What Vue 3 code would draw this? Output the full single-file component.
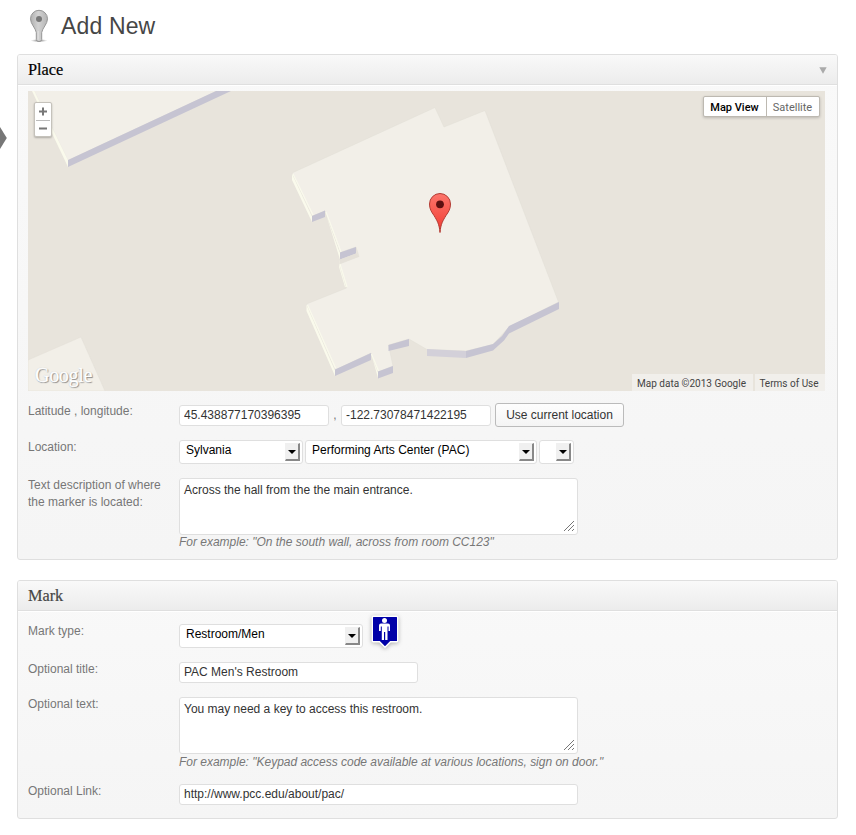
<script setup>
import { ref } from 'vue'

const lat = ref('45.438877170396395')
const lng = ref('-122.73078471422195')
const where = ref('Across the hall from the the main entrance.')
const title = ref("PAC Men's Restroom")
const text = ref('You may need a key to access this restroom.')
const link = ref('http://www.pcc.edu/about/pac/')
</script>

<template>
  <main class="page">
    <svg class="flyout" viewBox="0 0 7 24" width="7" height="24"><path d="M0 1L6.8 12L0 23Z" fill="#777" /></svg>
    <header class="title">
      <svg class="pin" viewBox="28 8 22 36" width="22" height="36">
        <defs>
          <linearGradient id="pinFill" x1="0" x2="1"><stop offset="0" stop-color="#b0b0b0" /><stop offset=".45" stop-color="#d2d2d2" /><stop offset="1" stop-color="#b4b4b4" /></linearGradient>
          <radialGradient id="pinShade"><stop offset="0" stop-color="#777" /><stop offset="1" stop-color="#999" stop-opacity="0" /></radialGradient>
        </defs>
        <ellipse cx="39" cy="40.600" rx="8.500" ry="1.700" fill="url(#pinShade)" />
        <path d="M30.500 18.800A8.500 8.500 0 0 1 47.500 18.800C47.500 24 42.400 28 41.700 32.500V39.500Q41.700 41.500 39 41.500Q36.300 41.500 36.300 39.500V32.500C35.600 28 30.500 24 30.500 18.800Z" fill="url(#pinFill)" stroke="#969696" />
        <circle cx="39" cy="19" r="3" fill="#777" />
        <path d="M38.200 31V39.500" stroke="#ddd" stroke-width="1.400" />
      </svg>
      <h1>Add New</h1>
    </header>

    <section class="panel place">
      <div class="bar"><h2 class="active">Place</h2><svg viewBox="0 0 8 7" width="8" height="7"><path d="M.3 .3H7.700L4 6.800Z" fill="#aaa" /></svg></div>
      <div class="map">
        <svg class="tiles" viewBox="28 91 797 300" width="797" height="300">
          <defs><linearGradient id="marker" x1="0" y1="0" x2="0" y2="1"><stop offset="0" stop-color="#fc756b" /><stop offset="1" stop-color="#f13a31" /></linearGradient></defs>
          <rect x="28" y="91" width="797" height="300" fill="#e8e4dc" />
          <path d="M32 91L68 167V160L34.500 91Z" fill="#fafaec" />
          <path d="M34.500 91L68 160L216 91Z" fill="#f2efe8" />
          <path d="M68 160L216 91H231L68 167Z" fill="#c6c4d2" />
          <path d="M28 360L81 337L105 391H28Z" fill="#f2efe8" stroke="#e3dfd7" stroke-width=".5" />
          <path d="M292 173V180L312 222V215ZM325 211L340 259.500V252ZM339 260V267L345 287L347 287ZM306.500 304V311L335 376V369ZM371 353L378 378V371Z" fill="#fafaec" />
          <path d="M292 173L435 107.500L444 127L485 110.500L558.500 302L509 327L493 344.500L466 351L427 349.500L409 339L388.500 345L393 366L378 372L371 353L335 370L306.500 304L346.500 288L339.500 264L359 256.500L356 247L340 252.500L325 211L312 216Z" fill="#f2efe8" stroke="#e0ddd4" stroke-width=".45" />
          <path d="M293 174L313 215M326 212L341 252M340 264L347 287M307.500 305L335.500 368M371.500 354L378.500 371" fill="none" stroke="#fafaec" stroke-width="1.200" />
          <path d="M312 216L325 210.500V217L312 222ZM340 252.500L356 247V253.500L340 259.500ZM335 369.500L371 353V360L335 376ZM388.500 345L409 339V346L388.500 351ZM378 371.500L393 366V373L378 378.500ZM466 351L493 344L502 336L509 326L559 302V309L509 333.500L504 340.500L493 350.500L466 358Z" fill="#c6c4d2" />
          <path d="M427 349L466 351V358L427 356Z" fill="#d3d0d9" />
          <path d="M340 259.500L356 253.500L359 256.500L339 264Z" fill="#e5e1d9" />
          <path d="M440 232.500C439.300 224 437 220.500 434 215.500C431.500 212 429.500 209 429.500 204A10.500 10.500 0 0 1 450.500 204C450.500 209 448.500 212 446 215.500C443 220.500 440.700 224 440 232.500Z" fill="url(#marker)" stroke="#b23b33" />
          <circle cx="440" cy="204.300" r="3.900" fill="#5c1010" />
        </svg>
        <div class="zoom">
          <svg viewBox="0 0 16 33" width="16" height="33"><path d="M4 8.500H12M8 4.500V12.500M4 25.500H12" stroke="#777" stroke-width="2" /><path d="M1 17.500H15" stroke="#bbb" /></svg>
        </div>
        <div class="modes"><b>Map View</b><span>Satellite</span></div>
        <span class="google">Google</span>
        <div class="credits"><span>Map data ©2013 Google</span><span>Terms of Use</span></div>
      </div>
      <div class="row r-lat">
        <label>Latitude , longitude:</label>
        <div class="field"><input v-model="lat" class="coord"><i class="comma">,</i><input v-model="lng" class="coord"><button>Use current location</button></div>
      </div>
      <div class="row r-loc">
        <label>Location:</label>
        <div class="field selects">
          <div class="select campus"><span>Sylvania</span><i class="arrow"></i></div>
          <div class="select building"><span>Performing Arts Center (PAC)</span><i class="arrow"></i></div>
          <div class="select room"><span></span><i class="arrow"></i></div>
        </div>
      </div>
      <div class="row r-where">
        <label>Text description of where<br>the marker is located:</label>
        <div class="stack">
          <div class="area"><textarea v-model="where"></textarea><svg viewBox="0 0 12 12" width="12" height="12"><path d="M1 11L11 1M5 11L11 5M9 11L11 9" stroke="#777" /></svg></div>
          <em>For example: "On the south wall, across from room CC123"</em>
        </div>
      </div>
    </section>

    <section class="panel mark">
      <div class="bar"><h2>Mark</h2></div>
      <div class="row r-type">
        <label>Mark type:</label>
        <div class="field">
          <div class="select type"><span>Restroom/Men</span><i class="arrow"></i></div>
          <svg class="men" viewBox="368 612 34 38" width="34" height="38">
            <path d="M373.500 616.300H396.500Q397.700 616.300 397.700 617.500V640.500Q397.700 641.800 396.500 641.800H390.500L385 647.300L379.500 641.800H373.500Q372.300 641.800 372.300 640.500V617.500Q372.300 616.300 373.500 616.300Z" fill="#0000a8" stroke="#fff" stroke-width="1.400" />
            <circle cx="384.500" cy="620.500" r="2.500" fill="#fff" />
            <path d="M381 623.500H388Q390 623.500 390 625.500V631H388.500V626.500H387.500V640H385.200V632H384V640H381.800V626.500H380.800V631H379V625.500Q379 623.500 381 623.500Z" fill="#fff" />
          </svg>
        </div>
      </div>
      <div class="row r-title"><label>Optional title:</label><div class="field"><input v-model="title" class="mid"></div></div>
      <div class="row r-text">
        <label>Optional text:</label>
        <div class="stack">
          <div class="area"><textarea v-model="text"></textarea><svg viewBox="0 0 12 12" width="12" height="12"><path d="M1 11L11 1M5 11L11 5M9 11L11 9" stroke="#777" /></svg></div>
          <em>For example: "Keypad access code available at various locations, sign on door."</em>
        </div>
      </div>
      <div class="row r-link"><label>Optional Link:</label><div class="field"><input v-model="link" class="wide"></div></div>
    </section>
  </main>
</template>

<style>
body { background: #fff; }
</style>

<style scoped>
* { box-sizing: border-box; }
.page { position: relative; height: 835px; padding: 8px 18px 0 17px; font: 12px/17px "Liberation Sans", Arial, sans-serif; color: #333; overflow: hidden; }
.flyout { position: absolute; left: 0; top: 126px; }
.title { display: flex; height: 46px; padding-left: 11px; }
h1 { margin: 3px 0 0 11px; font-size: 23px; line-height: 30px; font-weight: 400; color: #464646; letter-spacing: .15px; }
.panel { width: 821px; border: 1px solid #dfdfdf; border-radius: 3px; background: linear-gradient(#f9f9f9, #f5f5f5); }
.place { height: 506px; }
.mark { height: 239px; margin-top: 20px; }
.bar { display: flex; justify-content: space-between; align-items: center; height: 30px; padding: 0 10px; border-bottom: 1px solid #dfdfdf; background: linear-gradient(#f9f9f9, #ececec); box-shadow: 0 1px 0 #fff; border-radius: 2px 2px 0 0; }
.bar svg { margin-top: 1px; }
h2 { margin: 0; font: 400 16.300px/20px "Liberation Serif", serif; color: #464646; -webkit-text-stroke: .2px; }
h2.active { color: #000; }
.map { position: relative; width: 797px; height: 300px; margin: 6px 0 0 10px; overflow: hidden; font: 11px/17px Roboto, sans-serif; color: #444; }
.tiles { display: block; }
.zoom { position: absolute; left: 6px; top: 11px; width: 18px; height: 35px; border: 1px solid #c5c2bb; border-radius: 2px; background: #fff; box-shadow: 0 1px 2px rgba(0,0,0,.25); }
.zoom svg { display: block; }
.modes { position: absolute; left: 675px; top: 5px; display: flex; height: 21px; border: 1px solid #bdb9b1; border-radius: 2px; background: #fff; line-height: 21px; box-shadow: 0 1px 3px rgba(0,0,0,.2); }
.modes b { width: 63px; padding-right: 1px; text-align: center; font-weight: 500; color: #000; border-right: 1px solid #bdb9b1; }
.modes span { width: 52px; padding-right: 1px; text-align: center; color: #666; }
.google { position: absolute; left: 7px; top: 273px; font: 20px/22px "Liberation Serif", serif; color: #fff; letter-spacing: -.3px; -webkit-text-stroke: .3px #fff; text-shadow: 1px 1px 1px #888, 0 0 1px #aaa; }
.credits { position: absolute; right: 0; bottom: 0; display: flex; gap: 2px; font-size: 10px; line-height: 19px; }
.credits span { height: 17px; padding-right: 2px; background: #f1efeb; text-align: center; width: 70px; }
.credits span:first-child { width: 121px; }
.row { display: flex; padding-left: 10px; }
label { width: 151px; flex: none; color: #777; }
.field { display: flex; align-items: flex-start; }
input, textarea { display: block; margin: 0; border: 1px solid #dfdfdf; border-radius: 3px; background: #fff; color: #333; font: 12px/15px "Liberation Sans", Arial, sans-serif; outline: none; }
input { height: 21px; padding: 0 4px 2px; }
.coord { width: 150px; }
.comma { width: 12px; text-align: center; font-style: normal; color: #777; padding: 2px 0 0 0; }
button { height: 24px; width: 129px; margin: -2px 0 0 4px; padding: 0; border: 1px solid #bbb; border-radius: 3px; background: linear-gradient(#fefefe, #f4f4f4); color: #333; font: 12px/20px "Liberation Sans", Arial, sans-serif; white-space: nowrap; }
.mid { width: 239px; }
.wide { width: 399px; }
.selects { gap: 2px; }
.select { display: flex; justify-content: space-between; height: 24px; padding: 2px 2px 0 6px; border: 1px solid #dfdfdf; border-radius: 3px; background: #fff; color: #000; white-space: nowrap; line-height: 15px; }
.campus { width: 124px; }
.building { width: 232px; }
.room { width: 35px; }
.type { width: 184px; }
.arrow { display: flex; flex: none; justify-content: center; width: 15px; height: 18px; border: 1px solid #f0f0f0; border-right: 2px solid #888; border-bottom: 2px solid #888; background: #f0f0f0; }
.arrow::after { content: ""; margin-top: 6px; width: 0; height: 0; border: 4px solid transparent; border-top: 4px solid #000; border-bottom: 0; }
.area { position: relative; width: 399px; height: 57px; }
textarea { width: 399px; height: 57px; padding: 4px; resize: none; overflow: hidden; }
.area svg { position: absolute; right: 3px; bottom: 3px; }
em { display: block; line-height: 15px; color: #777; white-space: nowrap; letter-spacing: -.01px; }
.r-text em { padding-top: 1px; }
.r-lat { height: 49px; padding-top: 14px; }
.r-lat label { margin-top: -2px; }
.r-loc { height: 38px; }
.r-loc label { margin-top: -1px; }
.r-where label { margin-top: -1px; }
.building span { margin-left: 0; letter-spacing: .01px; }
.r-type { height: 51px; padding-top: 13px; }
.r-type label { margin-top: -1px; }
.men { margin: -12px 0 0 5px; filter: drop-shadow(0 1px 2px rgba(0,0,0,.3)); }
.r-title { height: 35px; }
.r-title label { margin-top: -1px; }
.r-text { height: 87px; }
.r-text label { margin-top: -1px; }
.r-link label { margin-top: -1px; }
</style>
